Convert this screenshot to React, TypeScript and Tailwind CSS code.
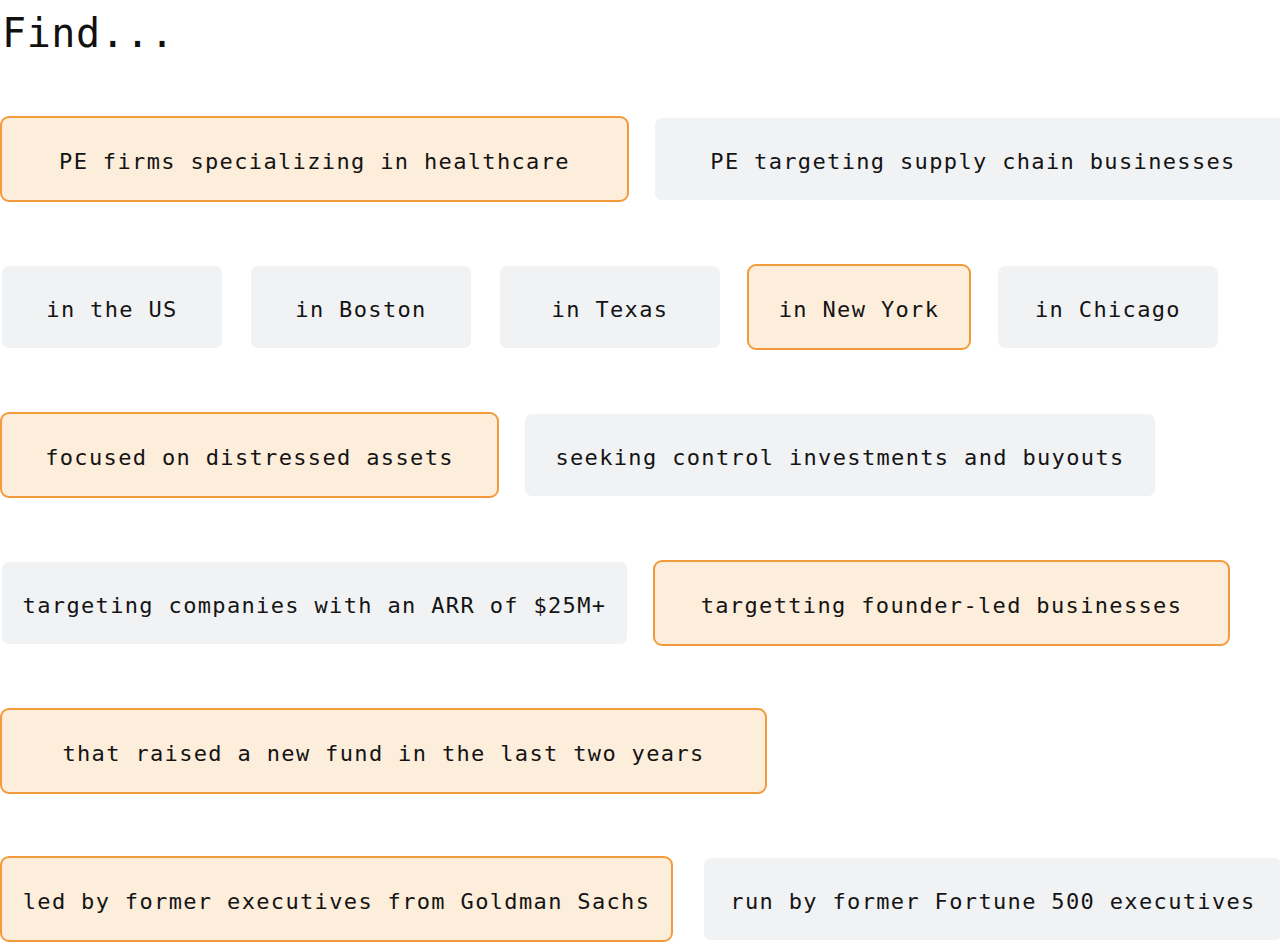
import React from "react";

type Chip = { label: string; w: string; on?: boolean };
type Row = { gap: string; chips: Chip[] };

const rows: Row[] = [
  {
    gap: "gap-x-[24px]",
    chips: [
      { label: "PE firms specializing in healthcare", w: "w-[629px]", on: true },
      { label: "PE targeting supply chain businesses", w: "w-[640px]" },
    ],
  },
  {
    gap: "gap-x-[25px]",
    chips: [
      { label: "in the US", w: "w-[224px]" },
      { label: "in Boston", w: "w-[224px]" },
      { label: "in Texas", w: "w-[224px]" },
      { label: "in New York", w: "w-[224px]", on: true },
      { label: "in Chicago", w: "w-[224px]" },
    ],
  },
  {
    gap: "gap-x-[24px]",
    chips: [
      { label: "focused on distressed assets", w: "w-[499px]", on: true },
      { label: "seeking control investments and buyouts", w: "w-[634px]" },
    ],
  },
  {
    gap: "gap-x-[24px]",
    chips: [
      { label: "targeting companies with an ARR of $25M+", w: "w-[629px]" },
      { label: "targetting founder-led businesses", w: "w-[577px]", on: true },
    ],
  },
  {
    gap: "gap-x-[24px]",
    chips: [
      { label: "that raised a new fund in the last two years", w: "w-[767px]", on: true },
    ],
  },
  {
    gap: "gap-x-[29px]",
    chips: [
      { label: "led by former executives from Goldman Sachs", w: "w-[673px]", on: true },
      { label: "run by former Fortune 500 executives", w: "w-[582px]" },
    ],
  },
];

function Pill({ chip }: { chip: Chip }) {
  const tone = chip.on
    ? "border-[#f39b3b] bg-[#fdeddb]"
    : "border-white bg-[#f1f2f4]";
  return (
    <button
      type="button"
      className={`flex h-[86px] shrink-0 items-center justify-center whitespace-nowrap rounded-[9px] border-2 pt-[4px] text-[22px] tracking-[1.35px] text-[#141414] ${chip.w} ${tone}`}
    >
      {chip.label}
    </button>
  );
}

export default function App() {
  return (
    <div className="h-[944px] w-[1280px] overflow-hidden bg-white font-['DejaVu_Sans_Mono','Liberation_Mono',monospace] text-[#111]">
      <h1 className="pt-[9px] pl-[2px] text-[40px] font-normal leading-[48px] tracking-[0.6px]">
        Find...
      </h1>
      <div className="mt-[59px] flex flex-col gap-y-[62px]">
        {rows.map((row, i) => (
          <div key={i} className={`flex ${row.gap}`}>
            {row.chips.map((c) => (
              <Pill key={c.label} chip={c} />
            ))}
          </div>
        ))}
      </div>
    </div>
  );
}
